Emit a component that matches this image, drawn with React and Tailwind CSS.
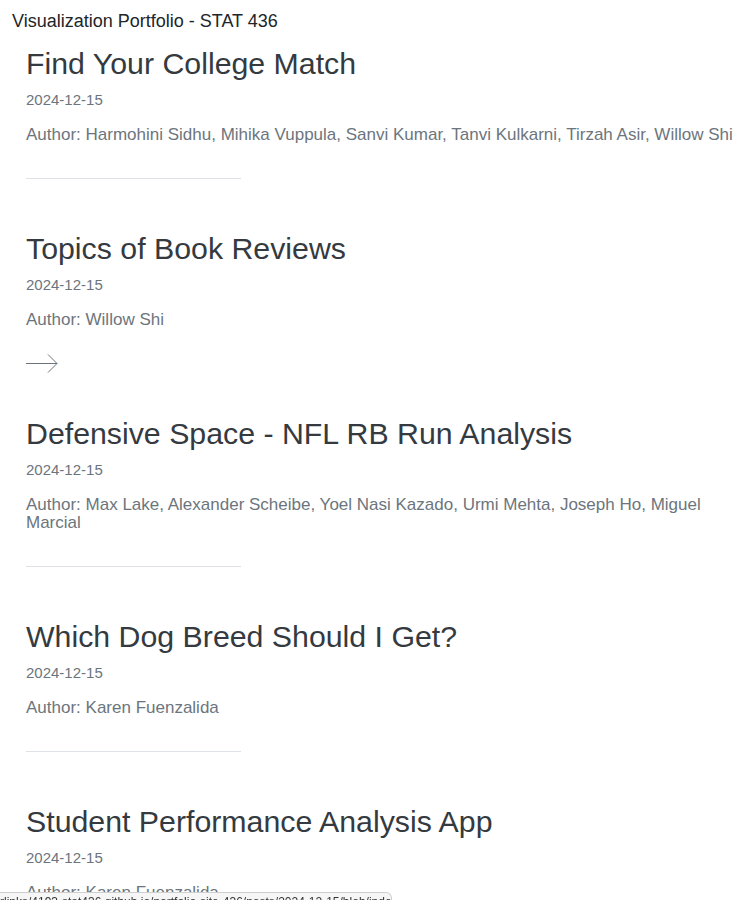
const posts = [
  {
    title: "Find Your College Match",
    date: "2024-12-15",
    author:
      "Harmohini Sidhu, Mihika Vuppula, Sanvi Kumar, Tanvi Kulkarni, Tirzah Asir, Willow Shi",
  },
  {
    title: "Topics of Book Reviews",
    date: "2024-12-15",
    author: "Willow Shi",
    hovered: true,
  },
  {
    title: "Defensive Space - NFL RB Run Analysis",
    date: "2024-12-15",
    author:
      "Max Lake, Alexander Scheibe, Yoel Nasi Kazado, Urmi Mehta, Joseph Ho, Miguel Marcial",
  },
  {
    title: "Which Dog Breed Should I Get?",
    date: "2024-12-15",
    author: "Karen Fuenzalida",
  },
  {
    title: "Student Performance Analysis App",
    date: "2024-12-15",
    author: "Karen Fuenzalida",
  },
];

const Arrow = () => (
  <svg width="32" height="22" viewBox="0 0 32 22" fill="none">
    <path d="M0 11.5H31" stroke="#6c757d" strokeWidth="1" />
    <path d="M22 2.5L31 11.5L22 20.5" stroke="#6c757d" strokeWidth="1" />
  </svg>
);

const App = () => {
  return (
    <div className="min-h-screen bg-white font-['Liberation_Sans',Arial,sans-serif]">
      {/* Site title */}
      <div className="pl-3 pt-[9px] text-[18px] leading-6 text-[#212529]">
        Visualization Portfolio - STAT 436
      </div>

      {/* Listing */}
      <div className="pl-[26px] pr-[14px] pt-[13px]">
        {posts.map((post) => (
          <div key={post.title} className="mb-[42px] flex flex-col">
            <h2 className="text-[30.3px] leading-9 text-[#343a40]">
              {post.title}
            </h2>
            <p className="mt-2 text-[15px] leading-5 text-[#6c757d]">
              {post.date}
            </p>
            <p className="mt-4 text-[17px] leading-[18px] text-[#6c757d]">
              Author: {post.author}
            </p>
            <div className="mt-[23px] flex h-[22px] items-center">
              {post.hovered ? (
                <Arrow />
              ) : (
                <div className="h-px w-[215px] bg-[#dee2e6]" />
              )}
            </div>
          </div>
        ))}
      </div>

      {/* Browser status bar */}
      <div className="fixed bottom-[-12px] left-0 h-5 w-[392px] overflow-hidden whitespace-nowrap rounded-tr-md border border-l-0 border-[#cfcfcf] bg-[#f6f6f6] text-[12px] leading-[18px] text-[#333]">
        rlinks/4193-stat436.github.io/portfolio-site-436/posts/2024-12-15/blob/index.html
      </div>
    </div>
  );
};

export default App;
